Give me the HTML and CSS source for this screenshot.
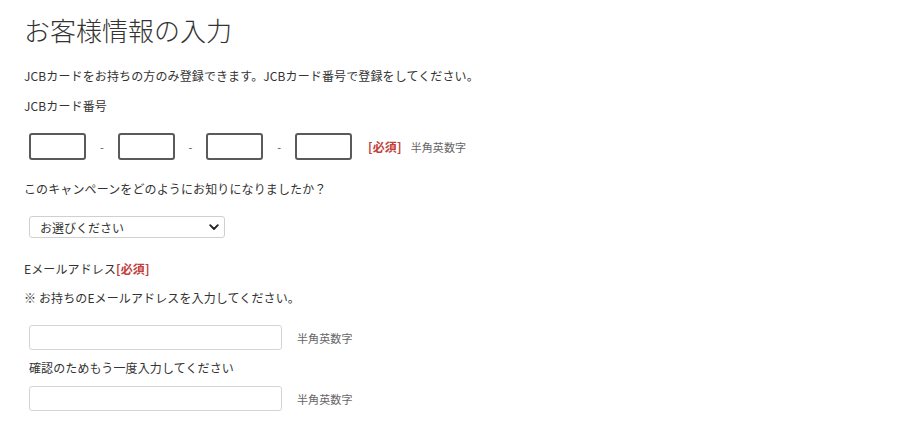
FILE: index.html
```html
<!DOCTYPE html>
<html lang="ja">
<head>
<meta charset="utf-8">
<title>お客様情報の入力</title>
<link rel="stylesheet" href="styles.css">
</head>
<body>
<div class="page">
  <h1 class="title">お客様情報の入力</h1>
  <p class="intro">JCBカードをお持ちの方のみ登録できます。JCBカード番号で登録をしてください。</p>
  <p class="label">JCBカード番号</p>
  <div class="card-row">
    <input class="card-box" type="text">
    <span class="dash">-</span>
    <input class="card-box" type="text">
    <span class="dash">-</span>
    <input class="card-box" type="text">
    <span class="dash">-</span>
    <input class="card-box" type="text">
    <span class="req req-card">[必須]</span>
    <span class="hint">半角英数字</span>
  </div>
  <p class="question">このキャンペーンをどのようにお知りになりましたか？</p>
  <div class="select-wrap">
    <select class="select">
      <option>お選びください</option>
    </select>
    <svg class="chev" width="10" height="7" viewBox="0 0 10 7"><path d="M1.2 1.2 L5 5 L8.8 1.2" fill="none" stroke="#222" stroke-width="1.8" stroke-linecap="round" stroke-linejoin="round"/></svg>
  </div>
  <p class="email-label">Eメールアドレス<span class="req">[必須]</span></p>
  <p class="note">※ お持ちのEメールアドレスを入力してください。</p>
  <div class="mail-row first">
    <input class="mail" type="text">
    <span class="hint mail-hint">半角英数字</span>
  </div>
  <p class="confirm">確認のためもう一度入力してください</p>
  <div class="mail-row second">
    <input class="mail" type="text">
    <span class="hint mail-hint">半角英数字</span>
  </div>
</div>
</body>
</html>
```
FILE: styles.css
```css
html, body {
  margin: 0;
  padding: 0;
  background: #fff;
}
body {
  font-family: "Noto Sans CJK JP", "Noto Sans", sans-serif;
  color: #333;
  font-size: 12px;
  letter-spacing: 0.12px;
}
.page {
  padding: 0 24px;
}
p {
  margin: 0;
  line-height: 18px;
}
.title {
  margin: 0;
  padding-top: 14px;
  font-size: 26px;
  line-height: 32px;
  font-weight: 300;
  letter-spacing: 0;
  color: #333;
}
.intro {
  margin-top: 21px;
}
.label {
  margin-top: 12px;
}
.card-row {
  margin-top: 18px;
  display: flex;
  align-items: center;
  padding-left: 5px;
  height: 27px;
}
.card-box {
  box-sizing: border-box;
  width: 57px;
  height: 27px;
  margin: 0;
  border: 2px solid #5a5a5a;
  border-radius: 3px;
  background: #fff;
}
.dash {
  width: 31.7px;
  text-align: center;
  font-size: 11px;
  color: #555;
}
.req {
  color: #c0403a;
  font-weight: bold;
}
.req-card {
  margin-left: 16px;
}
.hint {
  color: #666;
  font-size: 11px;
  margin-left: 9px;
}
.question {
  margin-top: 20px;
}
.select-wrap {
  margin-top: 18px;
  margin-left: 5px;
  position: relative;
  width: 196px;
  height: 22px;
}
.select {
  appearance: none;
  -webkit-appearance: none;
  box-sizing: border-box;
  width: 196px;
  height: 22px;
  margin: 0;
  padding: 0 0 0 10px;
  border: 1px solid #d0d0d0;
  border-radius: 3px;
  background: #fff;
  font-family: inherit;
  font-size: 12px;
  color: #333;
}
.chev {
  position: absolute;
  right: 6px;
  top: 8px;
  pointer-events: none;
}
.email-label {
  margin-top: 22px;
}
.note {
  margin-top: 11px;
}
.mail-row {
  display: flex;
  align-items: center;
  padding-left: 5px;
  height: 25px;
}
.mail-row.first {
  margin-top: 18px;
}
.mail-row.second {
  margin-top: 9px;
}
.mail {
  box-sizing: border-box;
  width: 253px;
  height: 25px;
  margin: 0;
  border: 1px solid #d4d4d4;
  border-radius: 3px;
  background: #fff;
}
.mail-hint {
  margin-left: 15px;
}
.confirm {
  margin-top: 9px;
  padding-left: 5px;
}
```
